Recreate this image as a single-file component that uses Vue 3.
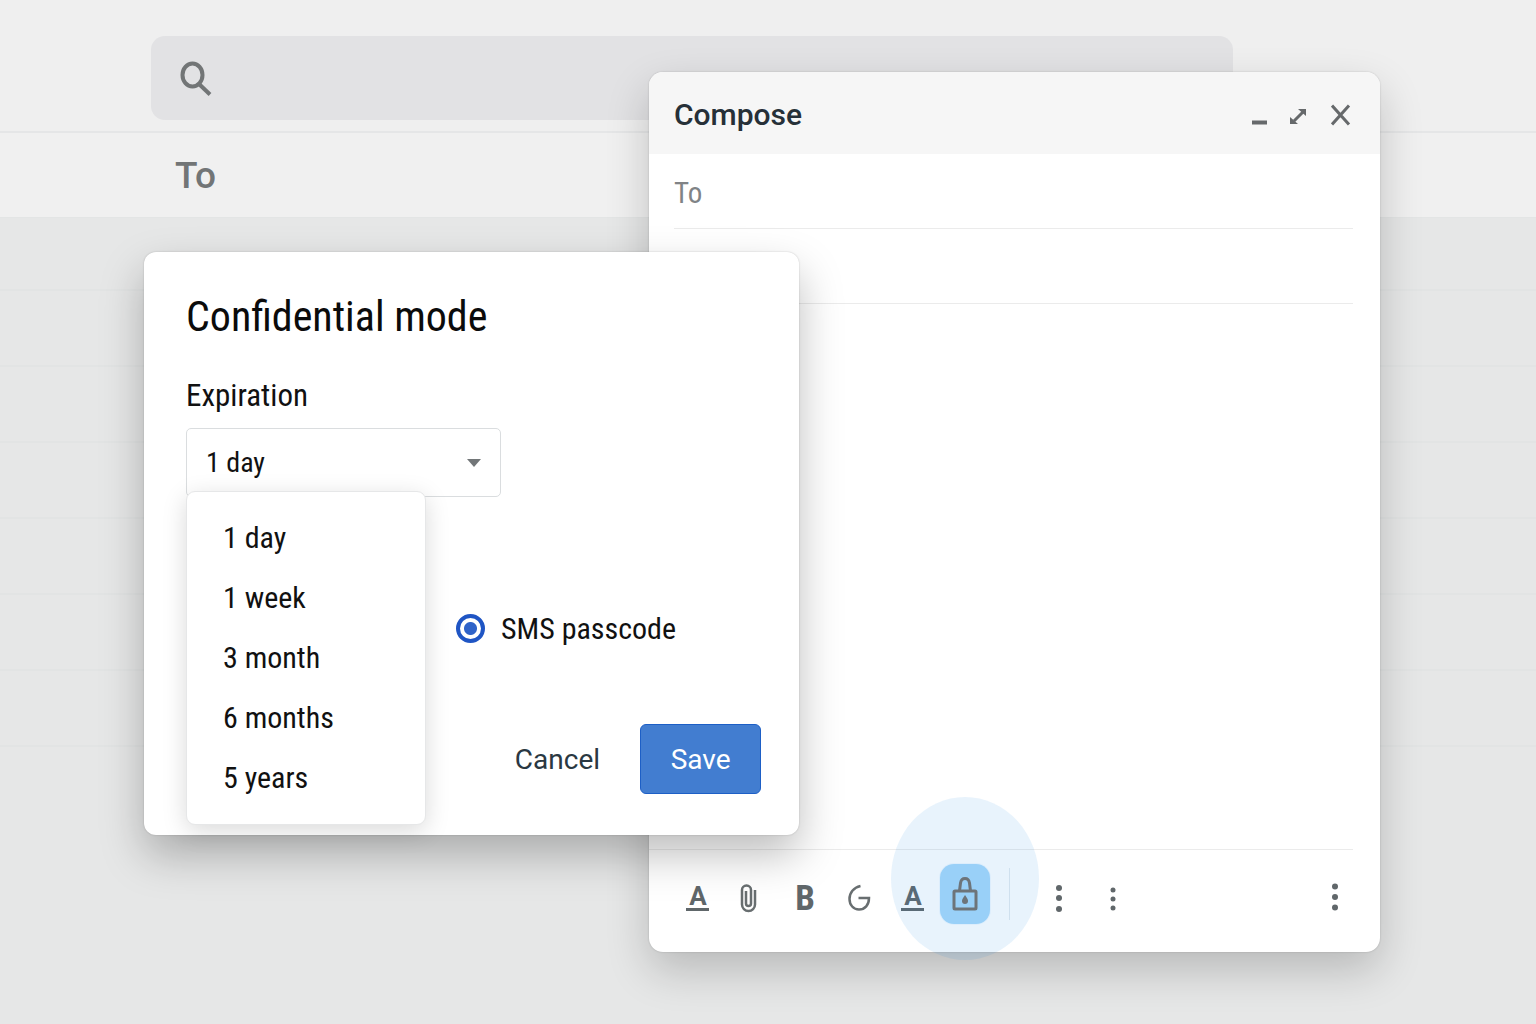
<script setup>
import { ref } from 'vue'

const options = ['1 day', '1 week', '3 month', '6 months', '5 years']
const expiration = ref('1 day')
const passcode = ref('sms')
const recipient = ref('')
const subject = ref('')
const message = ref('')
const query = ref('')
</script>

<template>
  <main class="screen">
    <header class="topbar">
      <label class="search">
        <svg width="34" height="36" viewBox="0 0 34 36" fill="none" stroke="#727576" stroke-width="4">
          <ellipse cx="13.500" cy="15" rx="10" ry="11.500" />
          <path d="M19.500 23.500 31 34.500" />
        </svg>
        <input v-model="query" type="search" aria-label="Search mail" />
      </label>
    </header>
    <div class="to-strip">To</div>
    <div class="mail-list">
      <div v-for="n in 7" :key="n" class="mail-row"></div>
    </div>

    <section class="compose" aria-label="Compose">
      <header class="compose-head">
        <h2>Compose</h2>
        <button type="button" aria-label="Minimize">
          <svg width="16" height="24" viewBox="0 0 16 24"><path d="M1 19.500h15" stroke="#66696b" stroke-width="4" /></svg>
        </button>
        <button type="button" aria-label="Full screen">
          <svg width="18" height="24" viewBox="0 0 18 24" fill="#66696b">
            <path d="M4 18 13 9" stroke="#66696b" stroke-width="3" />
            <path d="M8 6h8v7zM0 14v7h8z" />
          </svg>
        </button>
        <button type="button" aria-label="Close">
          <svg width="20" height="24" viewBox="0 0 20 24"><path d="M1 2.500 18 21.500M18 2.500 1 21.500" stroke="#66696b" stroke-width="3" /></svg>
        </button>
      </header>
      <input v-model="recipient" class="field" type="text" placeholder="To" aria-label="To" />
      <input v-model="subject" class="field" type="text" aria-label="Subject" />
      <textarea v-model="message" class="message" aria-label="Message"></textarea>
      <footer class="toolbar">
        <div class="group file-tools">
          <button type="button" class="tool" aria-label="Formatting"><span class="letter-a">A</span></button>
          <button type="button" class="tool" aria-label="Attach file">
            <svg width="18" height="30" viewBox="0 0 18 30" fill="none" stroke="#686e70" stroke-width="2.500">
              <path d="M16 7v14.500a6.500 6.500 0 0 1-13 0V7a4.500 4.500 0 0 1 9 0v13.500a2.500 2.500 0 0 1-5 0V8" />
            </svg>
          </button>
        </div>
        <div class="group">
          <button type="button" class="tool letter-b" aria-label="Bold">B</button>
          <button type="button" class="tool" aria-label="Google">
            <svg width="24" height="28" viewBox="0 0 24 28" fill="none" stroke="#686e70" stroke-width="2.500">
              <path d="M13.500 2C6.500 3.500 2.500 9 2.500 15c0 6 4 10.500 9.500 10.500 6 0 10-4.500 10-11.500H11.500" />
            </svg>
          </button>
          <button type="button" class="tool" aria-label="Text color"><span class="letter-a">A</span></button>
        </div>
        <button type="button" class="lock" aria-label="Confidential mode">
          <svg width="28" height="36" viewBox="0 0 28 36" fill="none" stroke="#76726f" stroke-width="3">
            <rect x="3" y="15" width="22" height="18" rx="1" />
            <path d="M8.500 15l1-8c1-6 8-6 9 0l1 8" />
            <path d="M14 19c2 3 3 4.500 3 6a3 3 0 0 1-6 0c0-1.500 1-3 3-6z" fill="#76726f" stroke="none" />
          </svg>
        </button>
        <span class="divider"></span>
        <button type="button" class="tool" aria-label="More formatting">
          <svg width="8" height="30" viewBox="0 0 8 30" fill="#60676a"><circle cx="4" cy="5" r="3" /><circle cx="4" cy="15" r="3" /><circle cx="4" cy="26" r="3" /></svg>
        </button>
        <button type="button" class="tool" aria-label="Insert options">
          <svg width="8" height="30" viewBox="0 0 8 30" fill="#60676a"><circle cx="4" cy="7" r="2.500" /><circle cx="4" cy="16" r="2.500" /><circle cx="4" cy="25" r="2.500" /></svg>
        </button>
        <button type="button" class="tool last" aria-label="More options">
          <svg width="8" height="30" viewBox="0 0 8 30" fill="#60676a"><circle cx="4" cy="3.500" r="3" /><circle cx="4" cy="14" r="3" /><circle cx="4" cy="24.500" r="3" /></svg>
        </button>
      </footer>
    </section>

    <form class="dialog" aria-labelledby="dialog-title" @submit.prevent>
      <h1 id="dialog-title">Confidential mode</h1>
      <label class="caption" for="expiration">Expiration</label>
      <div class="select-wrap">
        <select id="expiration" v-model="expiration">
          <option v-for="o in options" :key="o">{{ o }}</option>
        </select>
        <svg class="caret" width="14" height="8" viewBox="0 0 14 8" fill="#727678"><path d="M0 0h14L7 8z" /></svg>
        <ul class="menu">
          <li v-for="o in options" :key="o">
            <button type="button" @click="expiration = o">{{ o }}</button>
          </li>
        </ul>
      </div>
      <label class="radio">
        <input v-model="passcode" type="radio" name="passcode" value="sms" />
        SMS passcode
      </label>
      <div class="actions">
        <button type="button" class="cancel">Cancel</button>
        <button type="submit" class="save">Save</button>
      </div>
    </form>
  </main>
</template>

<style>
body {
  margin: 0;
  background: #e6e7e7;
}
</style>

<style scoped>
* {
  box-sizing: border-box;
}
.screen {
  position: relative;
  min-height: 100vh;
  overflow: hidden;
  background: #e6e7e7;
  color: #111;
  font-family: "Roboto Condensed", Roboto, sans-serif;
}
button,
input,
select,
textarea {
  margin: 0;
  padding: 0;
  border: 0;
  background: none;
  color: inherit;
  font: inherit;
  outline: 0;
}
button {
  display: flex;
  align-items: center;
  justify-content: center;
}

/* Mailbox behind the windows */
.topbar {
  padding: 36px 303px 11px 151px;
  border-bottom: 2px solid #e5e6e7;
  background: #efefef;
}
.search {
  display: flex;
  align-items: center;
  height: 84px;
  padding-left: 28px;
  gap: 16px;
  border-radius: 14px;
  background: #e2e2e4;
}
.search input {
  flex: 1;
  font-size: 28px;
}
.to-strip {
  height: 85px;
  padding-left: 175px;
  border-bottom: 1px solid #e3e5e5;
  background: #f0f0f0;
  color: #727576;
  font-family: Roboto, sans-serif;
  font-size: 37px;
  font-weight: 500;
  line-height: 86px;
}
.mail-row {
  height: 76px;
  border-bottom: 2px solid #e2e4e4;
}
.mail-row:first-child {
  height: 73px;
}

/* Compose window */
.compose {
  position: absolute;
  top: 72px;
  left: 42.250%;
  right: 10.150%;
  display: flex;
  flex-direction: column;
  border-radius: 14px;
  background: #fff;
  box-shadow: 0 0 2px rgba(0, 0, 0, 0.2), 0 18px 44px rgba(0, 0, 0, 0.2);
}
.compose-head {
  display: flex;
  align-items: center;
  height: 82px;
  padding: 4px 29px 0 25px;
  gap: 23px;
  border-radius: 14px 14px 0 0;
  background: #f6f6f6;
}
.compose-head h2 {
  flex: 1;
  margin: 0;
  color: #263038;
  font-family: Roboto, sans-serif;
  font-size: 30px;
  font-weight: 500;
  line-height: 40px;
}
.field {
  height: 75px;
  margin: 0 27px 0 25px;
  padding-top: 4px;
  border-bottom: 1px solid #ebebeb;
  color: #333;
  font-size: 29px;
}
.field::placeholder {
  color: #808386;
  opacity: 1;
}
.message {
  height: 545px;
  padding: 24px;
  resize: none;
  font-size: 24px;
}
.toolbar {
  position: relative;
  display: flex;
  align-items: flex-start;
  height: 103px;
  padding: 15px 18px 0 24px;
}
.toolbar::before {
  content: "";
  position: absolute;
  top: 0;
  left: 0;
  right: 27px;
  height: 1px;
  background: #ebebeb;
}
.group {
  display: flex;
}
.tool {
  width: 54px;
  height: 68px;
  color: #60676a;
}
.file-tools .tool {
  width: 50px;
}
.file-tools {
  margin-right: 5px;
}
.letter-a {
  width: 23px;
  height: 26px;
  border-bottom: 3px solid #60676a;
  font-family: Roboto, sans-serif;
  font-size: 26px;
  font-weight: 700;
  line-height: 22px;
}
.letter-b {
  font-size: 35px;
  font-weight: 700;
}
.lock {
  position: relative;
  width: 50px;
  height: 60px;
  border-radius: 14px;
  background: #a8d9fb;
  box-shadow: 0 0 0 1px #f2f9ff;
}
.lock::before {
  content: "";
  position: absolute;
  top: -67px;
  left: -49px;
  width: 148px;
  height: 163px;
  border-radius: 50%;
  background: rgba(33, 138, 230, 0.1);
}
.divider {
  width: 1px;
  height: 52px;
  margin: 4px 22px 0 19px;
  background: #e4eaf0;
}
.last {
  margin-left: auto;
}

/* Confidential mode dialog */
.dialog {
  position: absolute;
  top: 252px;
  left: 9.375%;
  width: 42.650%;
  padding: 42px 38px 41px 42px;
  border-radius: 12px;
  background: #fff;
  box-shadow: 0 0 2px rgba(0, 0, 0, 0.2), 0 20px 44px rgba(0, 0, 0, 0.26);
}
.dialog h1 {
  margin: 0;
  color: #0b0b0b;
  font-size: 42px;
  font-weight: 400;
  line-height: 46px;
}
.caption {
  display: block;
  margin-top: 40px;
  font-size: 31px;
  line-height: 32px;
}
.select-wrap {
  position: relative;
  width: 315px;
  margin-top: 16px;
}
.select-wrap select {
  display: block;
  width: 100%;
  height: 69px;
  padding-left: 19px;
  border: 1px solid #dadddf;
  border-radius: 5px;
  appearance: none;
  font-size: 28px;
}
.caret {
  position: absolute;
  top: 31px;
  right: 20px;
}
.menu {
  position: absolute;
  top: 63px;
  left: 0;
  width: 240px;
  margin: 0;
  padding: 15px 0 17px;
  border: 1px solid #e6e7e8;
  border-radius: 9px;
  background: #fff;
  box-shadow: 0 6px 24px rgba(0, 0, 0, 0.15);
  list-style: none;
}
.menu button {
  justify-content: flex-start;
  width: 100%;
  height: 60px;
  padding-left: 36px;
  font-size: 30px;
}
.radio {
  display: flex;
  align-items: center;
  width: max-content;
  height: 32px;
  margin: 115px 0 0 270px;
  gap: 16px;
  font-size: 30px;
}
.radio input {
  width: 29px;
  height: 29px;
  border: 4px solid #1f55c4;
  border-radius: 50%;
  appearance: none;
  background: radial-gradient(circle, #2f63c9 6px, #fff 7px);
}
.actions {
  display: flex;
  justify-content: flex-end;
  margin-top: 80px;
  gap: 40px;
  font-family: Roboto, sans-serif;
  font-size: 28px;
}
.cancel {
  color: #2a3842;
}
.save {
  width: 121px;
  height: 70px;
  border: 1px solid #1d5fc6;
  border-radius: 6px;
  background: #427dd0;
  color: #fff;
}
</style>
